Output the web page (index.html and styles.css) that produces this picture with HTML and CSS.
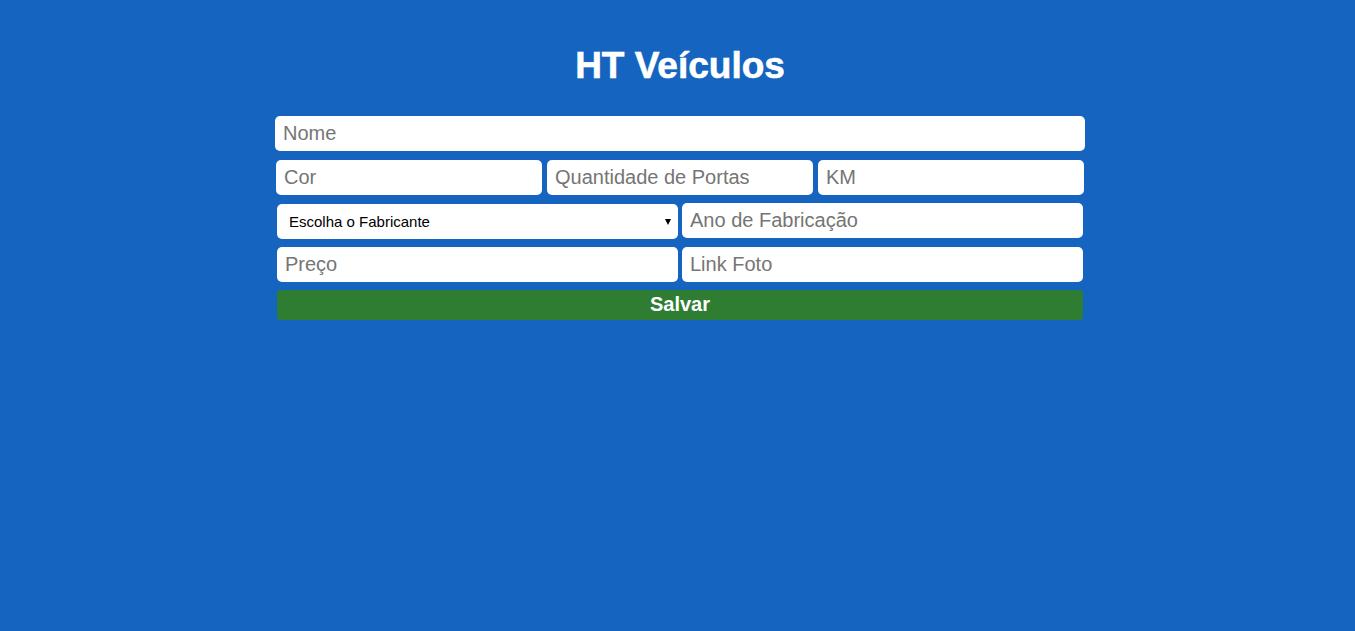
FILE: index.html
```html
<!DOCTYPE html>
<html lang="pt-BR">
<head>
<meta charset="utf-8">
<title>HT Veículos</title>
<link rel="stylesheet" href="styles.css">
</head>
<body>
<main class="page">
  <h1 class="title">HT Veículos</h1>
  <form class="form">
    <div class="row row-full">
      <input class="field" type="text" placeholder="Nome">
    </div>
    <div class="row row-three">
      <input class="field" type="text" placeholder="Cor">
      <input class="field" type="text" placeholder="Quantidade de Portas">
      <input class="field" type="text" placeholder="KM">
    </div>
    <div class="row row-two row-select">
      <div class="select-wrap">
        <select class="select">
          <option>Escolha o Fabricante</option>
        </select>
      </div>
      <input class="field field-up" type="text" placeholder="Ano de Fabricação">
    </div>
    <div class="row row-two">
      <input class="field" type="text" placeholder="Preço">
      <input class="field" type="text" placeholder="Link Foto">
    </div>
    <div class="row row-btn">
      <button class="btn" type="button">Salvar</button>
    </div>
  </form>
</main>
</body>
</html>
```

FILE: styles.css
```css
html, body {
  margin: 0;
  padding: 0;
  background: #1565c0;
  height: 100%;
}

body {
  font-family: "Liberation Sans", Arial, sans-serif;
}

.page {
  width: 810px;
  margin: 0 auto;
  padding: 46px 0 0 5px;
}

.title {
  margin: 0 0 30px;
  font-size: 37px;
  line-height: 40px;
  font-weight: bold;
  color: #ffffff;
  text-align: center;
  -webkit-text-stroke: 0.6px #ffffff;
}

.form {
  display: flex;
  flex-direction: column;
}

.row {
  display: grid;
}

.row-full {
  grid-template-columns: 1fr;
  height: 35px;
  margin-bottom: 9px;
}

.row-three {
  grid-template-columns: 1fr 1fr 1fr;
  padding: 0 1px;
  column-gap: 5px;
  height: 35px;
  margin-bottom: 9px;
}

.row-two {
  grid-template-columns: 1fr 1fr;
  padding: 0 2px;
  column-gap: 4px;
  height: 35px;
  margin-bottom: 9px;
}

.row-select {
  margin-bottom: 8px;
}

.row-btn {
  grid-template-columns: 1fr;
  padding: 0 2px;
  margin-top: -1px;
}

.field {
  width: 100%;
  min-width: 0;
  height: 35px;
  box-sizing: border-box;
  border: none;
  border-radius: 5px;
  background: #ffffff;
  padding: 0 8px;
  font-family: "Liberation Sans", Arial, sans-serif;
  font-size: 20px;
  color: #222;
  outline: none;
}

.field::placeholder {
  color: #757575;
}

.field-up {
  margin-top: -1px;
}

.select-wrap {
  position: relative;
  min-width: 0;
  height: 35px;
}

.select-wrap::after {
  content: "";
  position: absolute;
  right: 7px;
  top: 15px;
  border-left: 3.5px solid transparent;
  border-right: 3.5px solid transparent;
  border-top: 6px solid #000;
  pointer-events: none;
}

.select {
  -webkit-appearance: none;
  appearance: none;
  width: 100%;
  height: 35px;
  box-sizing: border-box;
  border: none;
  border-radius: 5px;
  background: #ffffff;
  padding: 0 12px;
  font-family: "Liberation Sans", Arial, sans-serif;
  font-size: 15px;
  color: #000;
  outline: none;
}

.btn {
  width: 100%;
  height: 30px;
  border: none;
  border-radius: 4px;
  background: #2e7d32;
  color: #ffffff;
  font-family: "Liberation Sans", Arial, sans-serif;
  font-size: 20px;
  font-weight: bold;
  padding: 0 0 2px;
  cursor: pointer;
}
```
